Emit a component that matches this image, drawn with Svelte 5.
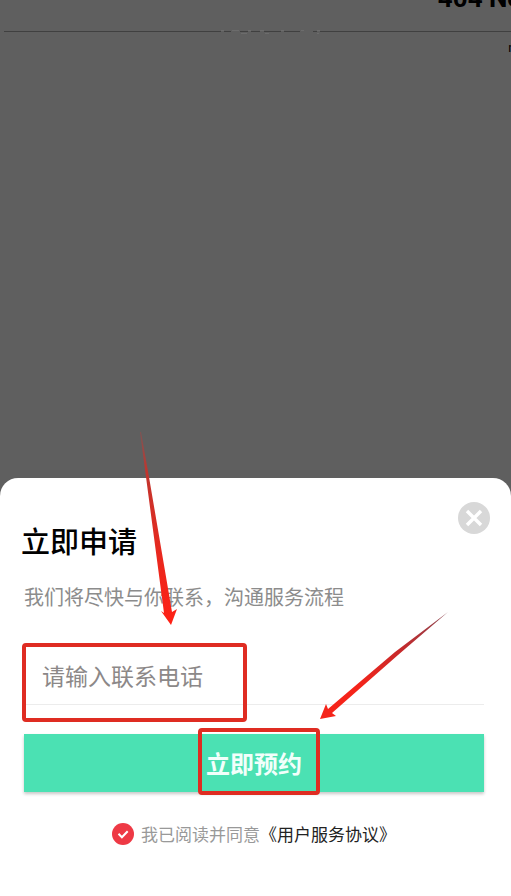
<script lang="ts">
    let phone = $state("");
    let agreed = $state(true);
    let open = $state(true);

    function submit(e: SubmitEvent) {
        e.preventDefault();
    }
</script>

<div class="screen">
    <!-- error page, wider than the screen, dimmed behind the sheet -->
    <main class="backdrop">
        <div class="error-page">
            <h1>404 Not Found</h1>
            <p>nginx</p>
        </div>
        <div class="rule">
            <span class="rule-left"></span>
            <svg width="99" height="4" viewBox="0 0 99 4" aria-hidden="true">
                <path
                    d="M3 1.5h7M19 1.5h8M30 1.5h9M43 1.5h17M63 1.5h16M92 1.5h4"
                    stroke="#404040"
                />
                <path
                    d="M0 .5h3M11 .5h7M27 .5h3M39 .5h4M60 .5h3M80 .5h3M96 .5h3M20 3.5h6M44 3.5h4M96 3.5h2"
                    stroke="#6c6c6c"
                />
            </svg>
            <span class="rule-right"></span>
        </div>
    </main>

    {#if open}
        <form class="sheet" onsubmit={submit}>
            <button
                type="button"
                class="close"
                aria-label="关闭"
                onclick={() => (open = false)}
            >
                <svg width="32" height="32" viewBox="0 0 32 32">
                    <circle cx="16" cy="16" r="16" fill="#d8d8d8" />
                    <path
                        d="M9 9l14 14M23 9L9 23"
                        stroke="#fff"
                        stroke-width="3.4"
                    />
                </svg>
            </button>

            <h2>立即申请</h2>
            <p class="subtitle">我们将尽快与你联系，沟通服务流程</p>

            <div class="field">
                <input
                    type="tel"
                    aria-label="联系电话"
                    placeholder="请输入联系电话"
                    bind:value={phone}
                />
                <span class="mark mark-field"></span>
            </div>

            <div class="action">
                <button type="submit" class="submit">立即预约</button>
                <span class="mark mark-submit"></span>
                <svg
                    class="arrow-submit"
                    width="128"
                    height="108"
                    viewBox="0 0 128 108"
                    aria-hidden="true"
                >
                    <defs>
                        <linearGradient id="fade-submit" x1="1" y1="0" x2="0" y2="1">
                            <stop offset="0" stop-color="#8a4650" />
                            <stop offset="0.35" stop-color="#c42a2c" />
                            <stop offset="0.7" stop-color="#f5241a" />
                        </linearGradient>
                    </defs>
                    <path
                        d="M128 0L75 40L8 97L6 92L0 107L16 104L12 101L78 43Z"
                        fill="url(#fade-submit)"
                    />
                </svg>
            </div>

            <div class="agreement">
                <label>
                    <input type="checkbox" bind:checked={agreed} />
                    <svg width="22" height="22" viewBox="0 0 22 22" class:off={!agreed}>
                        <circle cx="11" cy="11" r="11" fill="#ee3945" />
                        <path
                            d="M6.5 10.8l3.4 3.4 5.8-6"
                            fill="none"
                            stroke="#fff"
                            stroke-width="2"
                        />
                    </svg>
                    <span>我已阅读并同意</span>
                </label>
                <a href="#agreement">《用户服务协议》</a>
            </div>

            <svg
                class="arrow-field"
                width="40"
                height="196"
                viewBox="0 0 40 196"
                aria-hidden="true"
            >
                <defs>
                    <linearGradient id="fade-field" x1="0" y1="0" x2="0" y2="1">
                        <stop offset="0" stop-color="#9a4a48" stop-opacity="0.6" />
                        <stop offset="0.2" stop-color="#c0352e" />
                        <stop offset="0.65" stop-color="#ea281e" />
                        <stop offset="1" stop-color="#ff2014" />
                    </linearGradient>
                </defs>
                <path
                    d="M1 1L7 46L25 182L22 180L32 194L38 178L33 181L10 46L2 1Z"
                    fill="url(#fade-field)"
                />
            </svg>
        </form>
    {/if}
</div>

<style>
    :global(body) {
        margin: 0;
        background: #5f5f5f;
    }

    .screen {
        display: flex;
        flex-direction: column;
        min-height: 100vh;
        overflow: hidden;
        font-family: "Noto Sans CJK SC", sans-serif;
    }

    .backdrop {
        display: grid;
        flex: 1;
        align-content: start;
        background: #5f5f5f;
        color: #000;
    }

    .error-page,
    .rule {
        grid-area: 1 / 1;
    }

    .error-page {
        width: 205%;
        text-align: center;
        font-family: Roboto, sans-serif;
    }

    .error-page h1 {
        margin: -18px 0 0;
        font-size: 26px;
        line-height: 32px;
        font-weight: 700;
    }

    .error-page p {
        margin: 24px 0 0;
        font-size: 13px;
        line-height: 20px;
    }

    .rule {
        display: flex;
        align-items: flex-start;
        padding: 30px 0 0 4px;
    }

    .rule-left,
    .rule-right {
        height: 1px;
        margin-top: 1px;
        background: #404040;
    }

    .rule-left {
        flex: 217 1 0;
    }

    .rule-right {
        flex: 191 1 0;
    }

    .sheet {
        position: relative;
        padding: 44px 27px 50px 24px;
        border-radius: 18px 18px 0 0;
        background: #fff;
    }

    .close {
        position: absolute;
        top: 24px;
        right: 21px;
        padding: 0;
        border: 0;
        background: none;
        cursor: pointer;
    }

    svg {
        display: block;
    }

    h2 {
        margin: 0 0 0 -3px;
        color: #000;
        font-size: 29px;
        line-height: 36px;
        font-weight: 500;
    }

    .subtitle {
        margin: 25px 0 0;
        color: #8c8c8c;
        font-size: 20px;
        line-height: 28px;
        white-space: nowrap;
    }

    .field {
        position: relative;
        margin-top: 35px;
    }

    .field input {
        display: block;
        box-sizing: border-box;
        width: 100%;
        height: 59px;
        padding: 0 18px;
        border: 0;
        border-bottom: 1px solid #ececec;
        outline: 0;
        background: none;
        color: #333;
        font: inherit;
        font-size: 23px;
    }

    .field input::placeholder {
        color: #8c8888;
        opacity: 1;
    }

    .action {
        position: relative;
        margin-top: 29px;
    }

    .submit {
        display: block;
        width: 100%;
        height: 58px;
        padding: 0 0 2px;
        border: 0;
        background: #4be1b3;
        box-shadow: 0 2px 3px rgba(0, 0, 0, 0.22);
        color: #f2fffb;
        font: inherit;
        font-size: 24px;
        font-weight: 700;
        cursor: pointer;
    }

    /* red call-out frames and arrows */
    .mark {
        position: absolute;
        box-sizing: border-box;
        border: 4px solid #df2c22;
        border-radius: 4px;
        pointer-events: none;
    }

    .mark-field {
        top: -3px;
        left: -2px;
        width: 225px;
        height: 79px;
    }

    .mark-submit {
        top: -6px;
        left: calc(50% - 56px);
        width: 122px;
        height: 67px;
    }

    .arrow-submit {
        position: absolute;
        top: -122px;
        left: calc(50% + 66px);
        pointer-events: none;
    }

    .arrow-field {
        position: absolute;
        top: -47px;
        left: 139px;
        pointer-events: none;
    }

    .agreement {
        display: flex;
        align-items: center;
        justify-content: center;
        margin-top: 30px;
        font-size: 17px;
        line-height: 24px;
        white-space: nowrap;
    }

    .agreement label {
        display: flex;
        align-items: center;
        gap: 7px;
        color: #999;
        cursor: pointer;
    }

    .agreement input {
        position: absolute;
        width: 22px;
        height: 22px;
        margin: 0;
        opacity: 0;
    }

    .agreement svg.off {
        opacity: 0.3;
    }

    .agreement a {
        color: #222;
        text-decoration: none;
    }
</style>
